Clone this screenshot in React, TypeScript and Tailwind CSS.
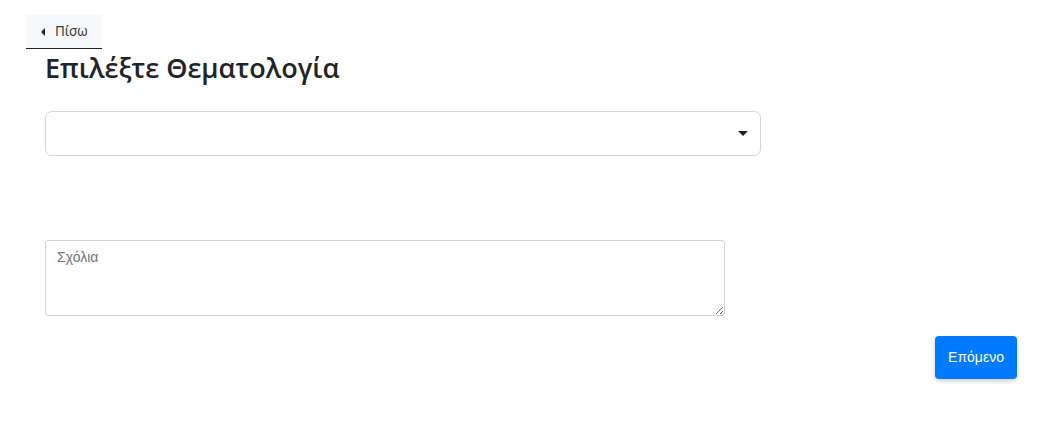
import React from "react";

export default function App() {
  return (
    <div className="w-[1048px] h-[422px] bg-white relative" style={{ fontFamily: "'Open Sans', 'Noto Sans', sans-serif" }}>
      <div className="pt-[15px] pl-[26px]">
        <button className="flex items-center h-[34px] px-[14px] bg-[#f8f9fa] border-b border-[#212529] text-[13.5px] font-normal text-[#343a40] font-['Noto_Sans',sans-serif]">
          <svg width="6" height="8" viewBox="0 0 6 8" className="mr-[9px]"><path d="M5 0 L1 4 L5 8 Z" fill="#212529" /></svg>
          Πίσω
        </button>
      </div>
      <div className="pl-[45px]">
        <h1 className="mt-[1px] text-[27px] leading-[36px] font-semibold text-[#212529]">Επιλέξτε Θεματολογία</h1>
        <div className="mt-[25px] w-[716px] h-[45px] border border-[#d6d6d6] rounded-[7px] flex items-center justify-end pr-[12px]">
          <svg width="10" height="5" viewBox="0 0 10 5"><path d="M0 0 L10 0 L5 5 Z" fill="#212529" /></svg>
        </div>
        <textarea
          placeholder="Σχόλια"
          className="block mt-[84px] w-[680px] h-[76px] border border-[#ced4da] rounded-[3px] px-[11px] pt-[6px] text-[14px] placeholder:text-[#6c757d] outline-none font-['Liberation_Sans',sans-serif]"
        />
      </div>
      <div className="flex justify-end pr-[31px] mt-[20px]">
        <button className="w-[82px] h-[43px] bg-[#007bff] text-white rounded-[4px] text-[14px] shadow-[0_2px_4px_rgba(0,0,0,0.2)] font-['Liberation_Sans',sans-serif]">
          Επόμενο
        </button>
      </div>
    </div>
  );
}
